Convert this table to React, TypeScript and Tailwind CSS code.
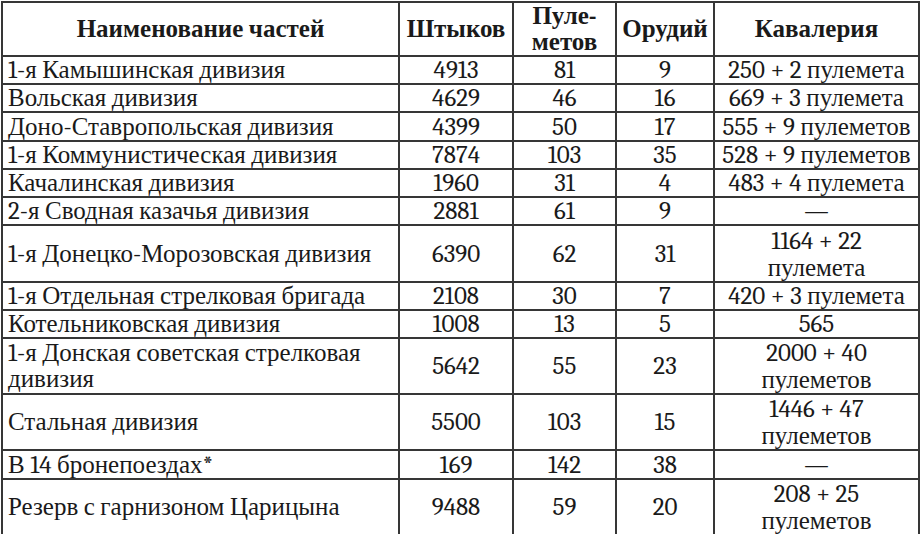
const rows: [string, string, string, string, string[], number][] = [
  ["1-я Камышинская дивизия", "4913", "81", "9", ["250 + 2 пулемета"], 28],
  ["Вольская дивизия", "4629", "46", "16", ["669 + 3 пулемета"], 28],
  ["Доно-Ставропольская дивизия", "4399", "50", "17", ["555 + 9 пулеметов"], 29],
  ["1-я Коммунистическая дивизия", "7874", "103", "35", ["528 + 9 пулеметов"], 28],
  ["Качалинская дивизия", "1960", "31", "4", ["483 + 4 пулемета"], 28],
  ["2-я Сводная казачья дивизия", "2881", "61", "9", ["—"], 27],
  ["1-я Донецко-Морозовская дивизия", "6390", "62", "31", ["1164 + 22", "пулемета"], 57],
  ["1-я Отдельная стрелковая бригада", "2108", "30", "7", ["420 + 3 пулемета"], 28],
  ["Котельниковская дивизия", "1008", "13", "5", ["565"], 28],
  ["1-я Донская советская стрелковая дивизия", "5642", "55", "23", ["2000 + 40", "пулеметов"], 55],
  ["Стальная дивизия", "5500", "103", "15", ["1446 + 47", "пулеметов"], 56],
  ["В 14 бронепоездах*", "169", "142", "38", ["—"], 29],
  ["Резерв с гарнизоном Царицына", "9488", "59", "20", ["208 + 25", "пулеметов"], 55],
];

const cell = "border-2 border-[#363636]";

export default function App() {
  return (
    <div className="w-[920px] h-[534px] bg-white pt-px pl-px text-[#1a1a1a] font-serif">
      <table className="table-fixed border-collapse text-[25px] leading-[26px] font-serif">
        <colgroup>
          <col className="w-[397px]" />
          <col className="w-[114px]" />
          <col className="w-[103px]" />
          <col className="w-[98px]" />
          <col className="w-[205px]" />
        </colgroup>
        <thead>
          <tr className="h-[54px] font-bold">
            <th className={`${cell} text-center`}>Наименование частей</th>
            <th className={`${cell} text-center`}>Штыков</th>
            <th className={`${cell} text-center leading-[26px]`}>
              <div>Пуле-</div>
              <div>метов</div>
            </th>
            <th className={`${cell} text-center`}>Орудий</th>
            <th className={`${cell} text-center`}>Кавалерия</th>
          </tr>
        </thead>
        <tbody>
          {rows.map(([name, bayonets, mg, guns, cav, h]) => (
            <tr key={name} style={{ height: h }}>
              <td className={`${cell} px-[5px] py-0 align-middle`}>{name}</td>
              <td className={`${cell} text-center align-middle`}>{bayonets}</td>
              <td className={`${cell} text-center align-middle`}>{mg}</td>
              <td className={`${cell} text-center align-middle`}>{guns}</td>
              <td className={`${cell} text-center align-middle whitespace-nowrap`}>
                {cav.map((line) => (
                  <div key={line} className={cav.length > 1 ? "leading-[27px]" : ""}>
                    {line}
                  </div>
                ))}
              </td>
            </tr>
          ))}
        </tbody>
      </table>
    </div>
  );
}
